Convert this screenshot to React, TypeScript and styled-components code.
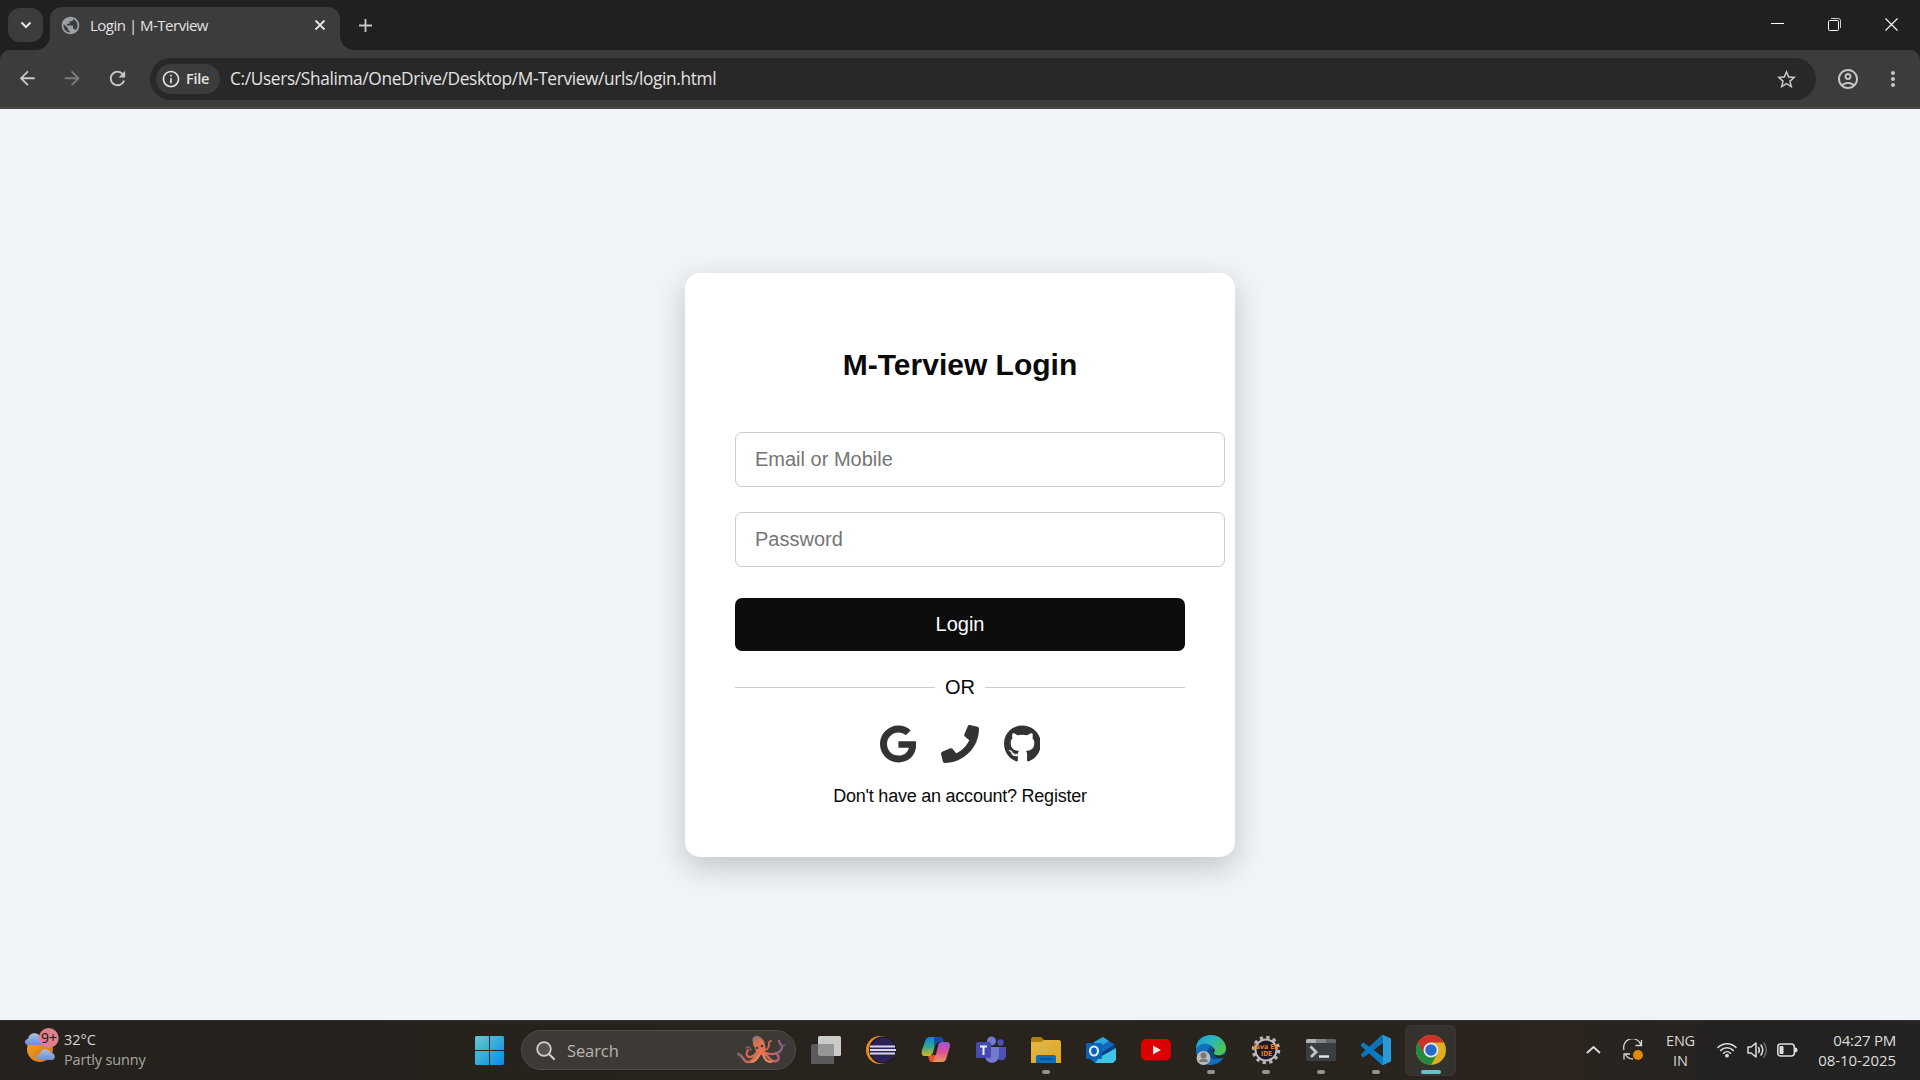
import React from "react";
import styled, { createGlobalStyle } from "styled-components";
import {
  MdArrowBack,
  MdArrowForward,
  MdRefresh,
  MdStarBorder,
  MdOutlineAccountCircle,
  MdMoreVert,
  MdInfoOutline,
  MdPublic,
} from "react-icons/md";
import { FaGoogle, FaPhone, FaGithub } from "react-icons/fa";

const UI_FONT = `"Open Sans", "Noto Sans", sans-serif`;
const PAGE_FONT = `"Liberation Sans", Arial, sans-serif`;

const GlobalStyle = createGlobalStyle`
  body { margin: 0; background: #f0f4f9; overflow: hidden; }
  *, *::before, *::after { box-sizing: border-box; }
  svg { display: block; flex: none; }
`;

const Screen = styled.div`
  width: 1920px;
  height: 1080px;
  display: flex;
  flex-direction: column;
  overflow: hidden;
`;

const Label = styled.span<{ $size: number; $track?: number; $color?: string; $weight?: number; $line?: number }>`
  font-family: ${UI_FONT};
  font-size: ${(p) => p.$size}px;
  letter-spacing: ${(p) => p.$track ?? 0}px;
  color: ${(p) => p.$color ?? "#e3e3e3"};
  font-weight: ${(p) => p.$weight ?? 400};
  line-height: ${(p) => p.$line ?? 20}px;
  white-space: nowrap;
`;

/* ---------- Browser chrome ---------- */

const TabStrip = styled.header`
  height: 50px;
  flex: none;
  display: flex;
  background: #1f2120;
  padding: 7px 0 0 8px;
`;

const TabSearch = styled.button`
  width: 35px;
  height: 34px;
  margin: 1px 7px 0 0;
  padding: 0;
  border: 0;
  border-radius: 12px;
  background: #3c3c3c;
  display: flex;
  align-items: center;
  justify-content: center;
`;

const Tab = styled.div`
  position: relative;
  width: 290px;
  height: 43px;
  border-radius: 12px 12px 0 0;
  background: #3c3c3c;
  display: flex;
  align-items: center;
  padding: 0 14px 7px 10px;
  &::before,
  &::after {
    content: "";
    position: absolute;
    bottom: 0;
    width: 14px;
    height: 14px;
  }
  &::before {
    left: -14px;
    background: radial-gradient(circle at 0 0, transparent 13.5px, #3c3c3c 14.2px);
  }
  &::after {
    right: -14px;
    background: radial-gradient(circle at 100% 0, transparent 13.5px, #3c3c3c 14.2px);
  }
`;

const TabTitle = styled.div`
  flex: 1;
  display: flex;
  padding: 0 0 0 9px;
`;

const NewTab = styled.div`
  padding: 11px 0 0 18px;
`;

const WindowControls = styled.div`
  margin-left: auto;
  display: flex;
  height: 34px;
`;

const WindowControl = styled.div`
  width: 57px;
  display: flex;
  align-items: center;
  justify-content: center;
`;

const ToolbarShell = styled.div`
  height: 59px;
  flex: none;
  background: #1f2120;
`;

const Toolbar = styled.div`
  height: 59px;
  background: #3c3c3c;
  border-radius: 10px 10px 0 0;
  border-bottom: 2px solid #4b4747;
  display: flex;
  align-items: center;
  padding: 0 5px;
`;

const ToolButton = styled.div<{ $dim?: boolean; $width?: number }>`
  width: ${(p) => p.$width ?? 45}px;
  display: flex;
  justify-content: center;
  color: ${(p) => (p.$dim ? "#7c7c7c" : "#c7c7c7")};
`;

const Omnibox = styled.div`
  flex: 1;
  height: 42px;
  margin: 1px 10px 0;
  border-radius: 21px;
  background: #282828;
  display: flex;
  align-items: center;
  padding: 0 18px 0 6px;
  color: #c7c7c7;
`;

const FileChip = styled.div`
  width: 64px;
  height: 30px;
  margin-right: 10px;
  border-radius: 15px;
  background: #3c3c3c;
  display: flex;
  align-items: center;
  gap: 5px;
  padding-left: 5px;
  color: #e3e3e3;
`;

const Url = styled.div`
  flex: 1;
`;

/* ---------- Page ---------- */

const Page = styled.main`
  flex: 1;
  background: #f0f4f9;
  display: flex;
  align-items: center;
  justify-content: center;
  font-family: ${PAGE_FONT};
`;

const Card = styled.form`
  width: 550px;
  height: 584px;
  margin-top: 1px;
  padding: 50px;
  border-radius: 15px;
  background: #fff;
  box-shadow: 0 10px 30px rgba(0, 0, 0, 0.2);
`;

const Title = styled.h1`
  margin: 23px 0 49px;
  font-size: 30px;
  line-height: 37px;
  font-weight: 700;
  text-align: center;
  color: #0a0a0a;
`;

const Field = styled.input`
  display: block;
  width: 490px;
  height: 55px;
  margin-bottom: 25px;
  padding: 0 19px;
  border: 1px solid #ccc;
  border-radius: 7px;
  background: #fff;
  font-family: ${PAGE_FONT};
  font-size: 20px;
  outline: none;
  &::placeholder {
    color: #757575;
    opacity: 1;
  }
`;

const LoginButton = styled.button`
  display: block;
  width: 450px;
  height: 53px;
  margin-top: 31px;
  padding: 0;
  border: 0;
  border-radius: 7px;
  background: #0d0d0d;
  color: #fff;
  font-family: ${PAGE_FONT};
  font-size: 20px;
`;

const Divider = styled.div`
  display: flex;
  align-items: center;
  gap: 10px;
  margin-top: 25px;
  font-size: 20px;
  line-height: 23px;
  color: #0a0a0a;
  &::before,
  &::after {
    content: "";
    flex: 1;
    height: 1px;
    background: #ccc;
  }
`;

const Socials = styled.div`
  display: flex;
  justify-content: center;
  gap: 25px;
  margin-top: 26px;
  color: #333;
`;

const SocialIcon = styled.a<{ $width: number }>`
  width: ${(p) => p.$width}px;
  height: 38px;
  svg {
    width: 100%;
    height: 38px;
  }
`;

const Register = styled.p`
  margin: 22px 0 0;
  font-size: 18px;
  line-height: 22px;
  letter-spacing: -0.23px;
  text-align: center;
  color: #0a0a0a;
`;

/* ---------- Taskbar ---------- */

const Taskbar = styled.footer`
  height: 60px;
  flex: none;
  display: flex;
  background: linear-gradient(90deg, #25211c 0%, #28231d 55%, #2b241f 82%, #222221 92%, #222322 100%);
  border-top: 1px solid #34322e;
`;

const Weather = styled.div`
  width: 475px;
  display: flex;
  gap: 5px;
  padding: 6px 0 0 25px;
`;

const WeatherText = styled.div`
  display: flex;
  flex-direction: column;
  padding-top: 3px;
`;

const Stack = styled.div<{ $align: string; $width?: number }>`
  display: flex;
  flex-direction: column;
  align-items: ${(p) => p.$align};
  width: ${(p) => (p.$width ? `${p.$width}px` : "auto")};
`;

const Start = styled.div`
  padding: 15px 17px 0 0;
`;

const SearchBox = styled.div`
  width: 275px;
  height: 40px;
  margin: 9px 2px 0 0;
  border: 1px solid #504d48;
  border-radius: 20px;
  background: #3d3934;
  display: flex;
  align-items: center;
  padding: 0 10px 0 14px;
`;

const SearchLabel = styled.div`
  flex: 1;
  padding: 2px 0 0 12px;
`;

const AppSlot = styled.div<{ $active?: boolean }>`
  width: 51px;
  height: 51px;
  margin: 4px 2px 0;
  border-radius: 6px;
  border: 1px solid ${(p) => (p.$active ? "#3b3833" : "transparent")};
  background: ${(p) => (p.$active ? "#35312c" : "transparent")};
  display: flex;
  flex-direction: column;
  align-items: center;
  padding-top: 9px;
`;

const Indicator = styled.div<{ $active?: boolean }>`
  width: ${(p) => (p.$active ? 20 : 8)}px;
  height: 4px;
  margin-top: 5px;
  border-radius: 2px;
  background: ${(p) => (p.$active ? "#68c3cd" : "#96928e")};
`;

const Tray = styled.div`
  margin-left: auto;
  display: flex;
  align-items: flex-start;
  padding-right: 24px;
`;

const TrayIcon = styled.div<{ $width: number }>`
  width: ${(p) => p.$width}px;
  height: 58px;
  display: flex;
  align-items: center;
  justify-content: center;
`;

const TrayText = styled.div`
  padding-top: 10px;
`;

const Clock = styled.div`
  width: 85px;
  padding-top: 9px;
`;

/* ---------- Drawings ---------- */

const WeatherIcon = () => (
  <svg width="34" height="38" viewBox="0 0 34 38">
    <defs>
      <linearGradient id="sun" x1="0" y1="0" x2="1" y2="1">
        <stop offset="0" stopColor="#eeac24" />
        <stop offset="1" stopColor="#dc6a12" />
      </linearGradient>
      <linearGradient id="cloud" x1="0" y1="0" x2="0" y2="1">
        <stop offset="0" stopColor="#a9bfe4" />
        <stop offset="1" stopColor="#6d8fd0" />
      </linearGradient>
    </defs>
    <circle cx="15" cy="22" r="13" fill="url(#sun)" />
    <path d="M3 18c-4 0-4-6 0-6 1-7 11-8 13 0 4 0 4 6 1 6z" fill="url(#cloud)" />
    <path d="M15 33c-4 0-4-6 0-6 1-6 9-6 11-1 5 0 5 7 1 7z" fill="url(#cloud)" />
    <circle cx="23.7" cy="11" r="10" fill="#dd808a" />
    <text x="16" y="16" fontFamily="Open Sans, sans-serif" fontSize="14" fill="#1c1516">9+</text>
  </svg>
);

const WindowsLogo = () => (
  <svg width="29" height="29" viewBox="0 0 29 29">
    <defs>
      <linearGradient id="win" x1="0" y1="0" x2="1" y2="1">
        <stop offset="0" stopColor="#65c8cb" />
        <stop offset="1" stopColor="#078cec" />
      </linearGradient>
    </defs>
    <path d="M1 0h13v14H0V1zM15 0h13l1 1v13H15zM0 15h14v14H1l-1-1zM15 15h14v13l-1 1H15z" fill="url(#win)" />
  </svg>
);

const Octopus = () => (
  <svg width="48" height="30" viewBox="0 0 48 30">
    <defs>
      <linearGradient id="octo" x1="0" y1="0" x2="0.3" y2="1">
        <stop offset="0" stopColor="#84707c" />
        <stop offset="0.5" stopColor="#dd7350" />
        <stop offset="1" stopColor="#e2734f" />
      </linearGradient>
      <linearGradient id="armL" gradientUnits="userSpaceOnUse" x1="0" y1="0" x2="24" y2="0">
        <stop offset="0" stopColor="#75637c" />
        <stop offset="0.4" stopColor="#c9655a" />
        <stop offset="1" stopColor="#e8754c" />
      </linearGradient>
      <linearGradient id="armR" gradientUnits="userSpaceOnUse" x1="24" y1="0" x2="48" y2="0">
        <stop offset="0" stopColor="#e8754c" />
        <stop offset="0.6" stopColor="#bd6268" />
        <stop offset="1" stopColor="#67609a" />
      </linearGradient>
    </defs>
    <g fill="none" strokeLinecap="round">
      <path d="M22 18c-4 3-6 10-12 9-4-1-4-7-9-8" stroke="url(#armL)" strokeWidth="2.600" />
      <path d="M22 16c-4 3-7 7-10 6s-3-5-1-7" stroke="url(#armL)" strokeWidth="2.400" />
      <path d="M14 15c-1-3-3-4-5-2" stroke="#8d6371" strokeWidth="1.400" />
      <path d="M27 18c4 2 6 10 12 8 4-1 3-5 1-7" stroke="url(#armR)" strokeWidth="2.600" />
      <path d="M29 18c8 3 16-1 16-6 0-3-3-3-3-6" stroke="url(#armR)" strokeWidth="2.300" />
      <path d="M28 15c4-1 4-4 4-7 0-1 1-2 2-2" stroke="url(#armR)" strokeWidth="1.800" />
      <path d="M23 19c-2 3-4 7-8 8M26 19c1 4 3 8 8 8" stroke="#ec8a5c" strokeWidth="2.200" />
      <path d="M46 11l2-1" stroke="#67609a" strokeWidth="1.400" />
    </g>
    <path d="M15.500 3L19 .5c5 1 8 4 8.500 8C29 12 29 17 26 20h-4c-2-2-4-4-4-7-2-2-2.500-6-2.500-10z" fill="url(#octo)" />
    <circle cx="20" cy="13" r="1.300" fill="#3e3558" />
    <circle cx="25" cy="11" r="1.300" fill="#3e3558" />
  </svg>
);

const TaskViewIcon = () => (
  <svg width="30" height="30" viewBox="0 0 30 30">
    <rect x="7" y="1" width="23" height="20" rx="1.5" fill="#cbcbca" />
    <rect x="0" y="9" width="23" height="20" rx="1.5" fill="#5a5b5c" />
    <path d="M7 9h16v12H8.500l-1.500-1.500z" fill="#969696" />
  </svg>
);

const EclipseIcon = () => (
  <svg width="30" height="30" viewBox="0 0 30 30">
    <circle cx="14" cy="15" r="14" fill="#e58a21" />
    <circle cx="16.500" cy="15" r="13.500" fill="#17131f" />
    <circle cx="17" cy="15" r="12.500" fill="#2d2258" />
    <path d="M4 11.500h25M4 15h26M4 18.500h25" stroke="#d9d8e4" strokeWidth="2" />
  </svg>
);

const CopilotIcon = () => (
  <svg width="30" height="30" viewBox="0 0 30 30">
    <defs>
      <linearGradient id="copA" x1="0" y1="0" x2="0" y2="1">
        <stop offset="0" stopColor="#1682d9" />
        <stop offset="0.5" stopColor="#2ba894" />
        <stop offset="1" stopColor="#e2b51c" />
      </linearGradient>
      <linearGradient id="copB" x1="0" y1="0" x2="0" y2="1">
        <stop offset="0" stopColor="#9a54d8" />
        <stop offset="0.5" stopColor="#df5297" />
        <stop offset="1" stopColor="#eb9556" />
      </linearGradient>
    </defs>
    <path d="M9 2h10c2 0 3 2 3.500 5h-5C14 7 14 12 12 17s-3 4-6 4H4c-3 0-4-2-3-6L4.500 5C5.500 3 7 2 9 2z" fill="url(#copA)" />
    <path d="M13 2h6c2 0 3 2 3.500 5h-5C15 7 14 9 13 12z" fill="#174ba4" />
    <path d="M21 27H11c-2 0-3-2-3.500-6 4 0 6-1 7.500-5l2-6c1-3 3-3 6-3h3c3 0 3.500 3 2.500 6l-3 10c-1 3-2 4-4.500 4z" fill="url(#copB)" />
    <path d="M7.500 21c4 0 6-1 7.500-5l-2 9c-.5 1.500-1 2-2 2-2 0-3-2-3.500-6z" fill="#e2542c" />
    <path d="M17.500 9.500L14.800 20l-2.300.5 3-9.500z" fill="#28231d" />
  </svg>
);

const TeamsIcon = () => (
  <svg width="30" height="30" viewBox="0 0 30 30">
    <circle cx="24.500" cy="7.500" r="3.200" fill="#4c51b2" />
    <path d="M21 12h9v8c0 5-4 6-7 5z" fill="#4c51b2" />
    <circle cx="15.500" cy="6" r="4.500" fill="#7479d1" />
    <path d="M9 12h14v9c0 9-14 9-14 0z" fill="#7479d1" />
    <rect x="0" y="7" width="15" height="16" rx="1.500" fill="#454baf" />
    <path d="M4 11.500h7M7.500 11.500V20" stroke="#eee" strokeWidth="2" />
  </svg>
);

const FolderIcon = () => (
  <svg width="30" height="30" viewBox="0 0 30 30">
    <defs>
      <linearGradient id="folder" x1="0" y1="0" x2="1" y2="1">
        <stop offset="0" stopColor="#deb850" />
        <stop offset="1" stopColor="#e4a51a" />
      </linearGradient>
    </defs>
    <path d="M1.500 2H10l3 3h15l1 3H0V3.500z" fill="#b17d0b" />
    <path d="M0 7h10l3-2h15.500L30 6.500V28H0z" fill="url(#folder)" />
    <path d="M5 28v-6q0-2 2-2h16q2 0 2 2v6z" fill="#086fbd" />
    <path d="M9 24h12" stroke="#064b84" strokeWidth="1.500" />
  </svg>
);

const OutlookIcon = () => (
  <svg width="30" height="30" viewBox="0 0 30 30">
    <path d="M4 11L17 2l12 8v15l-3 3H9l-5-4z" fill="#1269bd" />
    <path d="M8 7l9-5 6 4-15 9z" fill="#32a4df" />
    <path d="M14 19L29 9v5L16 23z" fill="#093c89" />
    <path d="M14 22l16-9v12l-3 3H9z" fill="#3fc5e3" />
    <rect x="0" y="8" width="16" height="16" rx="1" fill="#0763b3" />
    <ellipse cx="8" cy="16" rx="4" ry="4.500" fill="none" stroke="#e5edf5" strokeWidth="2.200" />
  </svg>
);

const YouTubeIcon = () => (
  <svg width="30" height="30" viewBox="0 0 30 30">
    <rect x="0" y="4" width="30" height="21.500" rx="5" fill="#dc0000" />
    <path d="M12 10.500l8 4.500-8 4.500z" fill="#e9e4e4" />
  </svg>
);

const EdgeIcon = () => (
  <svg width="30" height="30" viewBox="0 0 30 30">
    <defs>
      <linearGradient id="edgeA" x1="0" y1="0" x2="1" y2="0.600">
        <stop offset="0" stopColor="#1b9edb" />
        <stop offset="0.500" stopColor="#2bb5bd" />
        <stop offset="1" stopColor="#51c452" />
      </linearGradient>
    </defs>
    <circle cx="15" cy="15" r="15" fill="#0d4c8c" />
    <path d="M15 11c-5 3-5 12 2 13 6 1 10-2 11-3-3 7-10 9-15 9C3 28 0 21 0 14c2-6 10-8 15-3z" fill="#1170bf" />
    <path d="M0 14C0 5 7 0 15 0c9 0 15 7 15 13s-5 8-10 7c-4-1-2-2-2-5-1-7-14-9-18-1z" fill="url(#edgeA)" />
    <path d="M18 13c2 3-1 5 0 6 4 3 10 2 13-1l-1 3.500c-3 2-8 2.500-11-.5s-3-6-1-8z" fill="#28251f" />
    <circle cx="7.500" cy="23" r="7" fill="#bcbbb9" />
    <circle cx="7.500" cy="20.500" r="3" fill="#777" />
    <path d="M3 27c0-4.500 9-4.500 9 0z" fill="#777" />
  </svg>
);

const JavaIdeIcon = () => (
  <svg width="30" height="30" viewBox="0 0 30 30">
    <circle cx="15" cy="15" r="12.500" fill="none" stroke="#b7b5b3" strokeWidth="3.500" strokeDasharray="3.270 3.270" />
    <circle cx="15" cy="15" r="10.500" fill="#1c1828" stroke="#bdbbba" strokeWidth="2" />
    <text x="15" y="14" textAnchor="middle" fontFamily="DejaVu Sans, sans-serif" fontWeight="700" fontSize="6.800" textLength="25" lengthAdjust="spacingAndGlyphs" fill="#e5821f">Java EE</text>
    <text x="15.500" y="20.500" textAnchor="middle" fontFamily="DejaVu Sans, sans-serif" fontWeight="700" fontSize="6.800" textLength="11" lengthAdjust="spacingAndGlyphs" fill="#e5821f">IDE</text>
  </svg>
);

const TerminalIcon = () => (
  <svg width="30" height="30" viewBox="0 0 30 30">
    <rect x="0" y="4" width="30" height="22" rx="1.500" fill="#3b3e41" />
    <path d="M0 8V5.500Q0 4 1.500 4H10v4z" fill="#b2b2b2" />
    <path d="M10 4h10v4H10z" fill="#858585" />
    <path d="M20 4h8.500Q30 4 30 5.500V8H20z" fill="#626466" />
    <path d="M4.500 11.500l5.500 5.500-5 5" fill="none" stroke="#c6c6c6" strokeWidth="2.800" />
    <path d="M13 21.500h10" stroke="#e2e2e2" strokeWidth="2.500" />
  </svg>
);

const VsCodeIcon = () => (
  <svg width="30" height="30" viewBox="0 0 30 30">
    <path d="M22 8L2.500 22.500 0 20.500v-1.500L21 0l2 .5z" fill="#0e72b5" />
    <path d="M22 22L2.500 7.500 0 9.500V11l21 19 2-.5z" fill="#087cc0" />
    <path d="M22 0l8 3.500v23L22 30c-1 0-1-1 0-2V2c-1-1-1-2 0-2z" fill="#289bdc" />
  </svg>
);

const ChromeIcon = () => (
  <svg width="30" height="30" viewBox="0 0 30 30">
    <circle cx="15" cy="15" r="15" fill="#e0ae1e" />
    <path d="M15 15L2 7.500A15 15 0 0 0 15 30l6.500-11.500z" fill="#238a40" />
    <path d="M15 15V7.500h13A15 15 0 0 0 2 7.500l6.500 11.250z" fill="#c83428" />
    <circle cx="15" cy="15" r="7.500" fill="#e5e5e5" />
    <circle cx="15" cy="15" r="5.700" fill="#246bcb" />
  </svg>
);

const taskbarApps: { name: string; Icon: () => React.JSX.Element; open?: boolean; active?: boolean }[] = [
  { name: "taskview", Icon: TaskViewIcon },
  { name: "eclipse", Icon: EclipseIcon },
  { name: "copilot", Icon: CopilotIcon },
  { name: "teams", Icon: TeamsIcon },
  { name: "explorer", Icon: FolderIcon, open: true },
  { name: "outlook", Icon: OutlookIcon },
  { name: "youtube", Icon: YouTubeIcon },
  { name: "edge", Icon: EdgeIcon, open: true },
  { name: "java-ide", Icon: JavaIdeIcon, open: true },
  { name: "terminal", Icon: TerminalIcon, open: true },
  { name: "vscode", Icon: VsCodeIcon, open: true },
  { name: "chrome", Icon: ChromeIcon, open: true, active: true },
];

const BrowserChrome = () => (
  <>
    <TabStrip>
      <TabSearch>
        <svg width="12" height="8" viewBox="0 0 12 8">
          <path d="M1.500 1.500L6 6l4.500-4.500" fill="none" stroke="#e3e3e3" strokeWidth="2" />
        </svg>
      </TabSearch>
      <Tab>
        <MdPublic size={21} color="#9aa0a6" />
        <TabTitle>
          <Label $size={15} $track={-0.5}>Login | M-Terview</Label>
        </TabTitle>
        <svg width="12" height="12" viewBox="0 0 12 12">
          <path d="M1.500 1.500l9 9m0-9l-9 9" stroke="#e3e3e3" strokeWidth="1.900" />
        </svg>
      </Tab>
      <NewTab>
        <svg width="15" height="15" viewBox="0 0 15 15">
          <path d="M7.500 1v13M1 7.500h13" stroke="#c7c7c7" strokeWidth="1.800" />
        </svg>
      </NewTab>
      <WindowControls>
        <WindowControl>
          <svg width="13" height="13" viewBox="0 0 13 13">
            <path d="M0 5.500h13" stroke="#fff" />
          </svg>
        </WindowControl>
        <WindowControl>
          <svg width="13" height="13" viewBox="0 0 13 13">
            <path d="M3 .5h7.500q2 0 2 2V10" fill="none" stroke="#d0d0d0" />
            <rect x=".5" y="2.500" width="10" height="10" rx="1" fill="none" stroke="#fff" />
          </svg>
        </WindowControl>
        <WindowControl>
          <svg width="13" height="13" viewBox="0 0 13 13">
            <path d="M.5.5l12 12m0-12l-12 12" stroke="#fff" strokeWidth="1.100" />
          </svg>
        </WindowControl>
      </WindowControls>
    </TabStrip>
    <ToolbarShell>
      <Toolbar>
        <ToolButton><MdArrowBack size={22.5} /></ToolButton>
        <ToolButton $dim><MdArrowForward size={22.5} /></ToolButton>
        <ToolButton><MdRefresh size={23} /></ToolButton>
        <Omnibox>
          <FileChip>
            <MdInfoOutline size={20} />
            <Label $size={14.5} $track={-0.3} $weight={600}>File</Label>
          </FileChip>
          <Url>
            <Label $size={17.3} $track={-0.35}>C:/Users/Shalima/OneDrive/Desktop/M-Terview/urls/login.html</Label>
          </Url>
          <MdStarBorder size={23} />
        </Omnibox>
        <ToolButton $width={44}><MdOutlineAccountCircle size={24} /></ToolButton>
        <ToolButton><MdMoreVert size={24} /></ToolButton>
      </Toolbar>
    </ToolbarShell>
  </>
);

const LoginPage = () => (
  <Page>
    <Card>
      <Title>M-Terview Login</Title>
      <Field type="text" placeholder="Email or Mobile" />
      <Field type="password" placeholder="Password" />
      <LoginButton type="button">Login</LoginButton>
      <Divider>OR</Divider>
      <Socials>
        <SocialIcon $width={36.2}><FaGoogle /></SocialIcon>
        <SocialIcon $width={38}><FaPhone /></SocialIcon>
        <SocialIcon $width={36.8}><FaGithub /></SocialIcon>
      </Socials>
      <Register>Don't have an account? Register</Register>
    </Card>
  </Page>
);

const SystemTray = () => (
  <Tray>
    <TrayIcon $width={30}>
      <svg width="15" height="10" viewBox="0 0 15 10">
        <path d="M1 8l6.500-6L14 8" fill="none" stroke="#deddda" strokeWidth="1.800" />
      </svg>
    </TrayIcon>
    <TrayIcon $width={50}>
      <svg width="22" height="22" viewBox="0 0 22 22">
        <path d="M2 11A8.500 8.500 0 0 1 19 6M19.500 1v5.500h-6M11 20a8.500 8.500 0 0 1-7.500-4.500M2 20.500v-5.500h6" fill="none" stroke="#d8d6d3" strokeWidth="1.300" />
        <circle cx="16" cy="16" r="5" fill="#e18a05" />
      </svg>
    </TrayIcon>
    <TrayText>
      <Stack $align="center" $width={45}>
        <Label $size={14.5} $track={-0.2} $color="#d9d7d4">ENG</Label>
        <Label $size={14.5} $color="#d9d7d4">IN</Label>
      </Stack>
    </TrayText>
    <TrayIcon $width={48}>
      <svg width="20" height="16" viewBox="0 0 20 16">
        <g fill="none" stroke="#dedddb" strokeWidth="1.600" strokeLinecap="round">
          <path d="M1 5.500c5-5 13-5 18 0M3.800 8.400c3.500-3.500 9-3.500 12.400 0M6.500 11.200c2-2 5-2 7 0" />
        </g>
        <circle cx="10" cy="13.700" r="1.900" fill="#dedddb" />
      </svg>
    </TrayIcon>
    <TrayIcon $width={12}>
      <svg width="21" height="18" viewBox="0 0 21 18">
        <g fill="none" stroke="#dedddb" strokeWidth="1.500" strokeLinejoin="round" strokeLinecap="round">
          <path d="M1 6h3l5-4v14l-5-4H1z" />
          <path d="M11.500 6.500q1.700 2.500 0 5M14 4q3.500 5 0 10" />
          <path d="M17 2q4.500 7 0 14" stroke="#6b6965" />
        </g>
      </svg>
    </TrayIcon>
    <TrayIcon $width={48}>
      <svg width="21" height="14" viewBox="0 0 21 14">
        <rect x=".8" y="1" width="16.500" height="12" rx="3" fill="none" stroke="#dedddb" strokeWidth="1.500" />
        <rect x="2.500" y="3" width="4" height="8" rx="1" fill="#dedddb" />
        <path d="M18 4.500q2.500 0 2.500 2.500t-2.500 2.500z" fill="#dedddb" />
      </svg>
    </TrayIcon>
    <Clock>
      <Stack $align="flex-end">
        <Label $size={15} $track={-0.25} $color="#dfdedb">04:27 PM</Label>
        <Label $size={15} $track={-0.05} $color="#dfdedb">08-10-2025</Label>
      </Stack>
    </Clock>
  </Tray>
);

export default function App() {
  return (
    <Screen>
      <GlobalStyle />
      <BrowserChrome />
      <LoginPage />
      <Taskbar>
        <Weather>
          <WeatherIcon />
          <WeatherText>
            <Label $size={14.5} $color="#d9d7d4">32°C</Label>
            <Label $size={14.5} $track={-0.15} $color="#aaa7a3">Partly sunny</Label>
          </WeatherText>
        </Weather>
        <Start><WindowsLogo /></Start>
        <SearchBox>
          <svg width="19" height="19" viewBox="0 0 19 19">
            <circle cx="8" cy="8" r="6.800" fill="#55534f" stroke="#cfcdca" strokeWidth="1.800" />
            <path d="M13 13l5 5" stroke="#cfcdca" strokeWidth="2.200" strokeLinecap="round" />
          </svg>
          <SearchLabel>
            <Label $size={16.5} $track={-0.1} $color="#b9b6b2">Search</Label>
          </SearchLabel>
          <Octopus />
        </SearchBox>
        {taskbarApps.map(({ name, Icon, open, active }) => (
          <AppSlot key={name} $active={active}>
            <Icon />
            {open && <Indicator $active={active} />}
          </AppSlot>
        ))}
        <SystemTray />
      </Taskbar>
    </Screen>
  );
}
